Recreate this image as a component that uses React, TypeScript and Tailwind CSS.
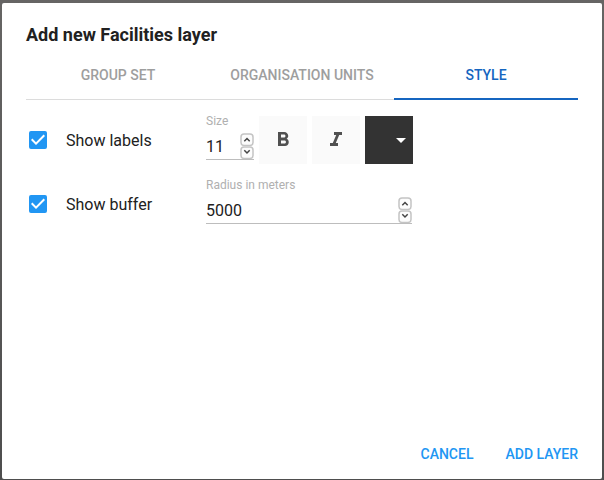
import { useState } from "react";

function Check({ label, checked, onChange }: { label: string; checked: boolean; onChange: (v: boolean) => void }) {
  return (
    <label className="flex h-12 w-[180px] shrink-0 items-center gap-4 text-base text-[#212121]">
      <span className="grid w-6 place-items-center">
        <input
          type="checkbox"
          checked={checked}
          onChange={(e) => onChange(e.target.checked)}
          className="peer col-start-1 row-start-1 size-[18px] appearance-none rounded-xs border-2 border-[#757575] checked:border-[#2196f3] checked:bg-[#2196f3]"
        />
        <svg viewBox="0 0 24 24" className="pointer-events-none col-start-1 row-start-1 hidden size-6 peer-checked:block" aria-hidden="true">
          <path d="M10 17l-5-5 1.41-1.41L10 14.17l7.59-7.59L19 8z" fill="#fff" />
        </svg>
      </span>
      <span className="pt-0.5">{label}</span>
    </label>
  );
}

function StepButton({ label, up, onClick }: { label: string; up?: boolean; onClick: () => void }) {
  return (
    <button type="button" aria-label={label} onClick={onClick} className="block">
      <svg width="14" height="13" viewBox="0 0 14 13" fill="none" aria-hidden="true">
        <rect x="1" y="1" width="12" height="11.4" rx="3" fill="#fcfcfc" stroke="#c4c4c4" strokeWidth="1.5" />
        <path d={up ? "M4.3 8.2L7 5.5 9.7 8.2" : "M4.3 4.3L7 7 9.7 4.3"} stroke="#444" strokeWidth="1.5" />
      </svg>
    </button>
  );
}

function NumberField({ id, label, initial, width }: { id: string; label: string; initial: number; width: string }) {
  const [value, setValue] = useState(initial);
  return (
    <div className={"flex flex-col gap-1.5 " + width}>
      <label htmlFor={id} className="text-xs leading-[10px] whitespace-nowrap text-[#b0b0b0]">
        {label}
      </label>
      <div className="flex h-7 items-end border-b border-[#bdbdbd]">
        <input
          id={id}
          type="number"
          value={value}
          onChange={(e) => setValue(Number(e.target.value))}
          className="h-full w-full min-w-0 flex-1 appearance-none bg-transparent pt-0.5 text-base text-[#212121] outline-none [-moz-appearance:textfield] [&::-webkit-inner-spin-button]:appearance-none"
        />
        <div className="flex flex-col">
          <StepButton up label={"Increase " + label} onClick={() => setValue(value + 1)} />
          <StepButton label={"Decrease " + label} onClick={() => setValue(value - 1)} />
        </div>
      </div>
    </div>
  );
}

const tabs = ["GROUP SET", "ORGANISATION UNITS", "STYLE"];

export default function App() {
  const [labels, setLabels] = useState(true);
  const [buffer, setBuffer] = useState(true);
  const [tab, setTab] = useState("STYLE");

  return (
    <div className="flex min-h-screen flex-col bg-linear-to-b from-[#666564] to-[#4e4e4e] px-0.5 pt-[3px] pb-px font-[Roboto,'Liberation_Sans',sans-serif]">
      <section role="dialog" aria-labelledby="dialog-title" className="flex flex-1 flex-col rounded-xs bg-white px-6 pt-5 pb-[15px]">
        <h1 id="dialog-title" className="text-lg leading-6 font-bold text-[#212121]">
          Add new Facilities layer
        </h1>
        <div role="tablist" className="mt-1 grid grid-cols-3">
          {tabs.map((name) => (
            <button
              key={name}
              type="button"
              role="tab"
              aria-selected={tab === name}
              onClick={() => setTab(name)}
              className="h-[49px] border-b border-[#dcdcdc] text-sm font-medium whitespace-nowrap text-[#9e9e9e] aria-selected:border-b-2 aria-selected:border-[#1565c0] aria-selected:text-[#1565c0]"
            >
              {name}
            </button>
          ))}
        </div>
        <div className="flex flex-1 flex-col gap-4 pt-4">
          <div className="flex">
            <Check label="Show labels" checked={labels} onChange={setLabels} />
            <div className="flex gap-[5px]">
              <NumberField id="size" label="Size" initial={11} width="w-12" />
              <button type="button" aria-label="Bold" className="grid size-12 place-items-center bg-[#fafafa]">
                <svg viewBox="0 0 24 24" className="size-6" fill="#505050" aria-hidden="true">
                  <path d="M15.6 10.79c.97-.67 1.65-1.77 1.65-2.79 0-2.26-1.75-4-4-4H7v14h7.04c2.09 0 3.71-1.7 3.71-3.79 0-1.52-.86-2.82-2.15-3.42zM10 6.5h3c.83 0 1.5.67 1.5 1.5s-.67 1.5-1.5 1.5h-3v-3zm3.5 9H10v-3h3.5c.83 0 1.5.67 1.5 1.5s-.67 1.5-1.5 1.5z" />
                </svg>
              </button>
              <button type="button" aria-label="Italic" className="grid size-12 place-items-center bg-[#fafafa]">
                <svg viewBox="0 0 24 24" className="size-6" fill="#505050" aria-hidden="true">
                  <path d="M10 4v3h2.21l-3.42 8H6v3h8v-3h-2.21l3.42-8H18V4z" />
                </svg>
              </button>
              <button type="button" aria-label="Label color" className="flex size-12 items-center justify-end bg-[#333333]">
                <svg viewBox="0 0 24 24" className="size-6" fill="#fff" aria-hidden="true">
                  <path d="M7 10l5 5 5-5z" />
                </svg>
              </button>
            </div>
          </div>
          <div className="flex">
            <Check label="Show buffer" checked={buffer} onChange={setBuffer} />
            <NumberField id="radius" label="Radius in meters" initial={5000} width="w-[206px]" />
          </div>
        </div>
        <div className="flex justify-end gap-8 text-sm font-medium text-[#2196f3]">
          <button type="button">CANCEL</button>
          <button type="button">ADD LAYER</button>
        </div>
      </section>
    </div>
  );
}
